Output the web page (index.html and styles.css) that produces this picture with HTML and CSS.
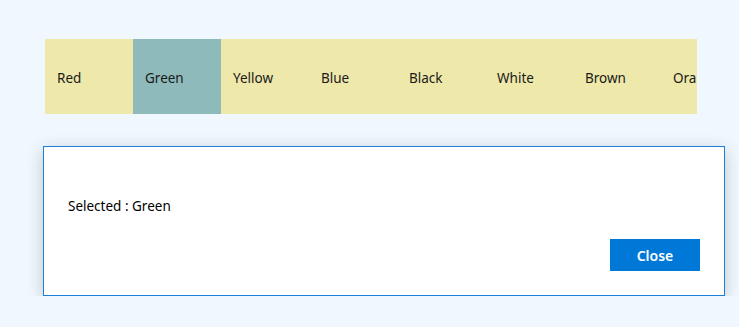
FILE: index.html
```html
<!DOCTYPE html>
<html lang="en">
<head>
  <meta charset="UTF-8" />
  <meta name="viewport" content="width=device-width, initial-scale=1.0"/>
  <title>Colors</title>
  <link rel="stylesheet" href="styles.css">
</head>
<body>
  <div class="strip">
    <div class="item">Red</div>
    <div class="item selected">Green</div>
    <div class="item">Yellow</div>
    <div class="item">Blue</div>
    <div class="item">Black</div>
    <div class="item">White</div>
    <div class="item">Brown</div>
    <div class="item">Orange</div>
  </div>

  <div class="dialog">
    <p class="dialog-text">Selected : Green</p>
    <div class="dialog-actions">
      <button class="close-btn">Close</button>
    </div>
  </div>
</body>
</html>
```

FILE: styles.css
```css
body { font-family: "Noto Sans", "Open Sans", sans-serif; font-size:13.5px; background:#f0f7ff; color:#1a1a1a; margin:0; padding:39px 0 0 0; }
.strip { display:flex; margin-left:45px; width:652px; height:75px; overflow:hidden; background:#eee8aa; }
.item { flex:none; width:88px; box-sizing:border-box; padding-left:12px; display:flex; align-items:center; padding-top:3px; white-space:nowrap; }
.item.selected { background:#8fbabb; }
.dialog { margin:32px 0 0 43px; width:680px; height:148px; border:1px solid #1e7fd8; background:#fff; box-shadow:0 4px 16px rgba(0,0,0,0.2); display:flex; flex-direction:column; }
.dialog-text { margin:50px 0 0 24px; color:#000; }
.dialog-actions { margin-top:auto; padding:0 24px 24px 0; display:flex; justify-content:flex-end; }
.close-btn { width:90px; height:32px; border:none; background:#0078d7; color:#fff; font-family:inherit; font-size:14px; font-weight:600; cursor:pointer; }
```
